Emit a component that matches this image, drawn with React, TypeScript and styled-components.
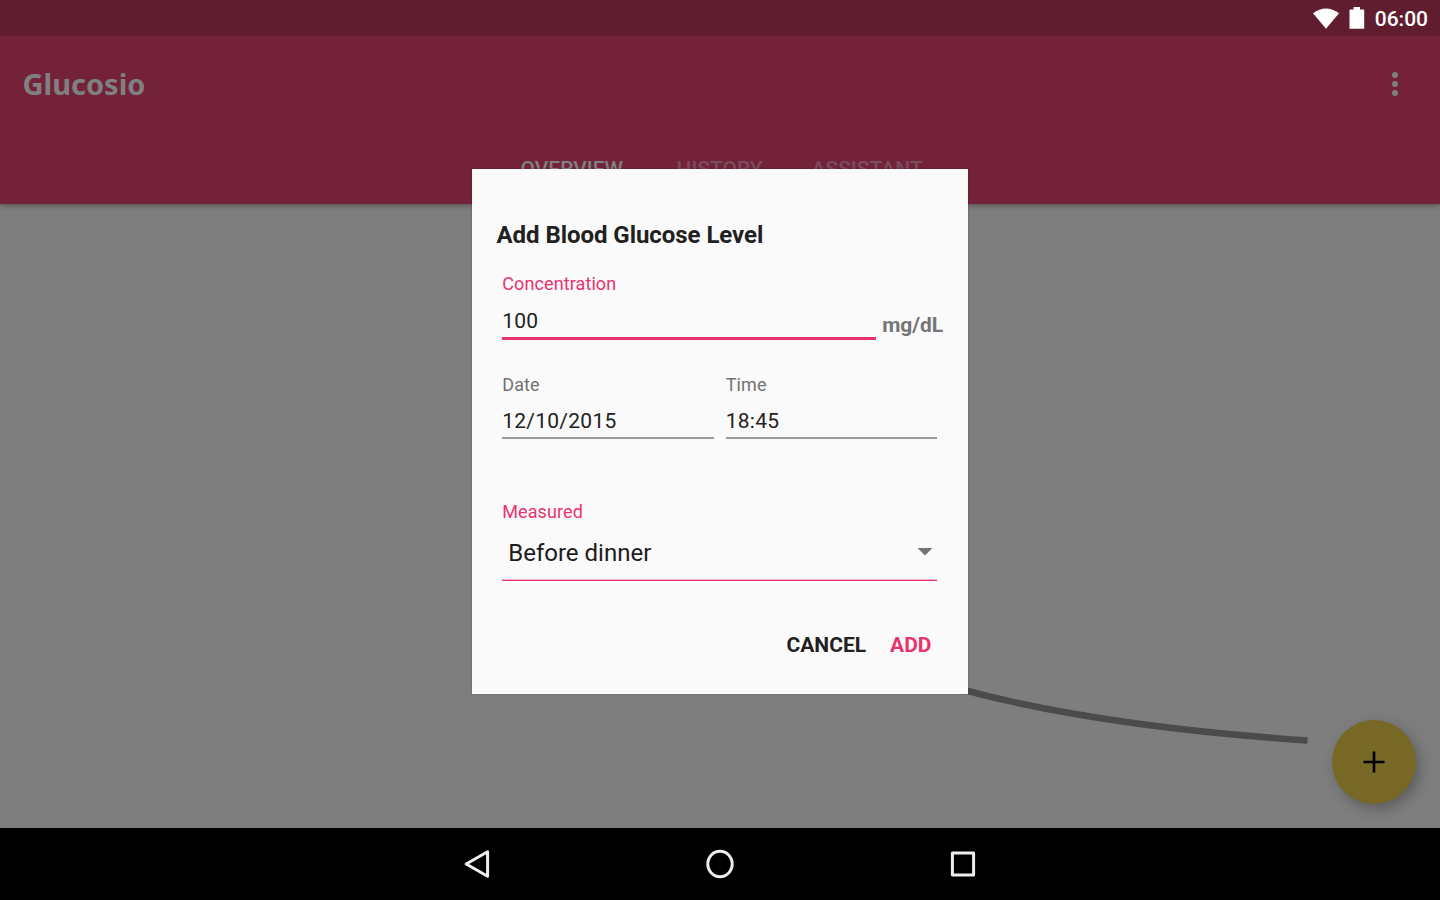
import React from "react";
import styled, { createGlobalStyle } from "styled-components";

const PINK = "#e8336f";

const GlobalStyle = createGlobalStyle`
  *, *::before, *::after { box-sizing: border-box; }
  body {
    margin: 0;
    background: #000;
    font-family: Roboto, "Liberation Sans", sans-serif;
    overflow: hidden;
  }
  button { font: inherit; border: 0; background: none; padding: 0; margin: 0; color: inherit; }
`;

const Device = styled.div`
  position: relative;
  display: flex;
  flex-direction: column;
  width: 1440px;
  height: 900px;
  overflow: hidden;
  background: #7e7e7e;
`;

const StatusBar = styled.header`
  position: relative;
  z-index: 1;
  display: flex;
  justify-content: flex-end;
  align-items: center;
  flex: none;
  height: 36px;
  padding-right: 12px;
  background: #601d30;
  color: #fff;
`;

const WifiIcon = styled.svg`
  width: 26px;
  height: 21px;
  margin-right: 10.5px;
`;

const BatteryIcon = styled.svg`
  width: 16px;
  height: 22px;
  margin-right: 9.5px;
`;

const Clock = styled.span`
  font-size: 21px;
  font-weight: 500;
  line-height: 24px;
  padding-top: 2px;
`;

const AppBar = styled.div`
  display: flex;
  flex-direction: column;
  flex: none;
  height: 168px;
  background: #74223a;
  box-shadow: 0 1px 6px rgba(0, 0, 0, 0.4);
`;

const Toolbar = styled.div`
  display: flex;
  align-items: center;
  justify-content: space-between;
  height: 96px;
  padding: 0 40px 0 22.5px;
`;

const AppTitle = styled.h1`
  margin: 0;
  padding-bottom: 1px;
  font-family: "Noto Sans", "Open Sans", sans-serif;
  font-size: 29px;
  font-weight: 700;
  line-height: 40px;
  color: #808080;
`;

const OverflowButton = styled.button`
  display: flex;
  flex-direction: column;
  align-items: center;
  gap: 2.8px;
  width: 10px;
`;

const Dot = styled.span`
  width: 6.2px;
  height: 6.2px;
  border-radius: 50%;
  background: #808080;
`;

const Tabs = styled.nav`
  display: flex;
  height: 72px;
  padding: 25px 0 0 520.5px;
`;

const Tab = styled.span<{ $active?: boolean; $width: number }>`
  width: ${(p) => p.$width}px;
  font-size: 21px;
  font-weight: 500;
  line-height: 25px;
  white-space: nowrap;
  color: ${(p) => (p.$active ? "#808080" : "#7b4c5d")};
`;

const Content = styled.main`
  position: relative;
  flex: 1;
  z-index: 0;
`;

const Chart = styled.svg`
  display: block;
  width: 1440px;
  height: 624px;
`;

const Fab = styled.button`
  position: absolute;
  right: 24px;
  bottom: 24px;
  width: 84px;
  height: 84px;
  display: grid;
  place-items: center;
  border-radius: 50%;
  background: #786825;
  box-shadow: 4px 5px 14px rgba(0, 0, 0, 0.27);
`;

const NavBar = styled.footer`
  display: flex;
  justify-content: center;
  align-items: center;
  gap: 211px;
  flex: none;
  height: 72px;
  background: #000;
`;

const NavIcon = styled.svg`
  width: 32px;
  height: 32px;
  fill: none;
  stroke: #eee;
  stroke-width: 3;
  stroke-linejoin: round;
`;

const DialogLayer = styled.div`
  position: absolute;
  z-index: 2;
  inset: 0;
  display: flex;
  justify-content: center;
  align-items: flex-start;
  padding-top: 169px;
`;

const Dialog = styled.section`
  display: flex;
  flex-direction: column;
  width: 496px;
  height: 525px;
  padding: 52px 24.5px 0;
  background: #fafafa;
  color: #212121;
  box-shadow: 0 0 2px rgba(0, 0, 0, 0.25);
`;

const DialogTitle = styled.h2`
  margin: 0;
  font-size: 24px;
  font-weight: 700;
  line-height: 28px;
  letter-spacing: -0.05px;
`;

const Row = styled.div<{ $top: number }>`
  display: flex;
  align-items: flex-start;
  gap: 12px;
  margin-top: ${(p) => p.$top}px;
  padding-left: 5.75px;
`;

const Field = styled.label<{ $width: number }>`
  display: flex;
  flex-direction: column;
  flex: none;
  width: ${(p) => p.$width}px;
`;

const FieldLabel = styled.span<{ $accent?: boolean }>`
  font-size: 18px;
  line-height: 21px;
  letter-spacing: 0.1px;
  color: ${(p) => (p.$accent ? PINK : "#737373")};
`;

const FieldValue = styled.span<{ $focused?: boolean }>`
  height: ${(p) => (p.$focused ? 46 : 42)}px;
  padding-top: ${(p) => (p.$focused ? 15 : 14)}px;
  font-size: 21px;
  line-height: 25px;
  letter-spacing: 0.25px;
  border-bottom: ${(p) => (p.$focused ? `3px solid ${PINK}` : "0")};
`;

const Underline = styled.span`
  height: 2px;
  background: #999;
`;

const Unit = styled.span`
  margin: 40px 0 0 -6px;
  font-size: 21px;
  font-weight: 700;
  line-height: 25px;
  letter-spacing: -0.1px;
  color: #757575;
`;

const Select = styled.span`
  display: flex;
  justify-content: space-between;
  height: 59px;
  padding: 16px 4px 0 6px;
  font-size: 24px;
  line-height: 30px;
  color: #1c1c1c;
  border-bottom: 1px solid ${PINK};
  box-shadow: inset 0 -1px 0 #f6b4ca;
`;

const Caret = styled.svg`
  width: 16px;
  height: 8px;
  margin-top: 10px;
  fill: #757575;
`;

const Actions = styled.div`
  display: flex;
  justify-content: flex-end;
  gap: 24px;
  margin-top: 52px;
  padding-right: 12px;
`;

const Action = styled.button<{ $primary?: boolean }>`
  font-size: 21px;
  font-weight: 700;
  line-height: 25px;
  color: ${(p) => (p.$primary ? PINK : "#212121")};
`;

export default function App() {
  return (
    <>
      <GlobalStyle />
      <Device>
        <StatusBar>
          <WifiIcon viewBox="0 0 27 22" fill="#fff" preserveAspectRatio="none">
            <path d="M0 5.6 Q13.5 -4.6 27 5.6 L13.5 21.7 Z" />
          </WifiIcon>
          <BatteryIcon viewBox="0 0 16 22" fill="#fff">
            <path d="M4.6 0H11V2.4H14.6Q15.2 2.4 15.2 3V21.2Q15.2 21.8 14.6 21.8H1.1Q.5 21.8 .5 21.2V3Q.5 2.4 1.1 2.4H4.6Z" />
          </BatteryIcon>
          <Clock>06:00</Clock>
        </StatusBar>
        <AppBar>
          <Toolbar>
            <AppTitle>Glucosio</AppTitle>
            <OverflowButton aria-label="More options">
              <Dot />
              <Dot />
              <Dot />
            </OverflowButton>
          </Toolbar>
          <Tabs>
            <Tab $active $width={156}>OVERVIEW</Tab>
            <Tab $width={135}>HISTORY</Tab>
            <Tab $width={130}>ASSISTANT</Tab>
          </Tabs>
        </AppBar>
        <Content>
          <Chart viewBox="0 0 1440 624">
            <path d="M960 485 Q1096 522 1307.5 536.5" fill="none" stroke="#4b4b4c" strokeWidth="6.5" />
          </Chart>
          <Fab aria-label="Add reading">
            <svg width="22" height="22" viewBox="0 0 22 22" stroke="#000" strokeWidth="2.6">
              <path d="M11 .5V21.5M.5 11H21.5" />
            </svg>
          </Fab>
        </Content>
        <NavBar>
          <NavIcon viewBox="0 0 32 32">
            <path d="M26.6 3.8V28.2L5.2 16Z" />
          </NavIcon>
          <NavIcon viewBox="0 0 32 32">
            <ellipse cx="16" cy="16" rx="12.2" ry="12.7" />
          </NavIcon>
          <NavIcon viewBox="0 0 32 32">
            <path d="M5.4 4.9H26.6V27.1H5.4Z" />
          </NavIcon>
        </NavBar>
        <DialogLayer>
          <Dialog>
            <DialogTitle>Add Blood Glucose Level</DialogTitle>
            <Row $top={24}>
              <Field $width={374}>
                <FieldLabel $accent>Concentration</FieldLabel>
                <FieldValue $focused>100</FieldValue>
              </Field>
              <Unit>mg/dL</Unit>
            </Row>
            <Row $top={34}>
              <Field $width={211.5}>
                <FieldLabel>Date</FieldLabel>
                <FieldValue>12/10/2015</FieldValue>
                <Underline />
              </Field>
              <Field $width={211.5}>
                <FieldLabel>Time</FieldLabel>
                <FieldValue>18:45</FieldValue>
                <Underline />
              </Field>
            </Row>
            <Row $top={62}>
              <Field $width={435}>
                <FieldLabel $accent>Measured</FieldLabel>
                <Select>
                  Before dinner
                  <Caret viewBox="0 0 16 8">
                    <path d="M.5 0H15.5L8 7.5Z" />
                  </Caret>
                </Select>
              </Field>
            </Row>
            <Actions>
              <Action>CANCEL</Action>
              <Action $primary>ADD</Action>
            </Actions>
          </Dialog>
        </DialogLayer>
      </Device>
    </>
  );
}
